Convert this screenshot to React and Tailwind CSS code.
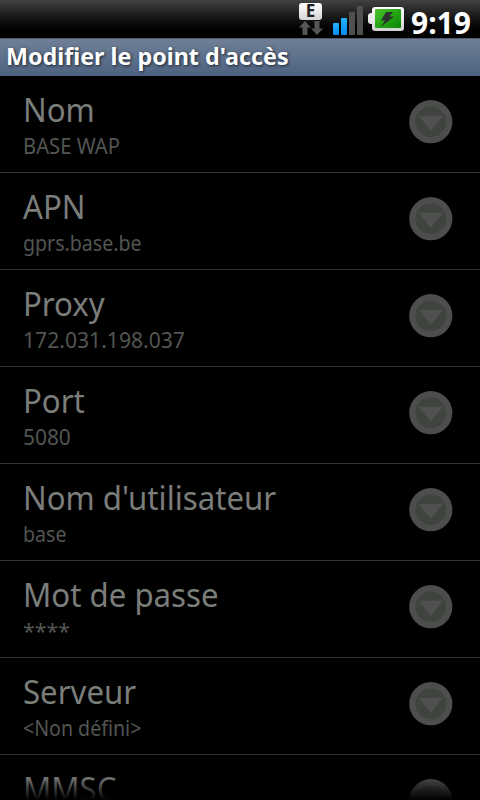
import React from "react";

const settings = [
  { title: "Nom", value: "BASE WAP", stretch: "scale-x-[0.92]" },
  { title: "APN", value: "gprs.base.be" },
  { title: "Proxy", value: "172.031.198.037", stretch: "scale-x-[0.96]" },
  { title: "Port", value: "5080", stretch: "scale-x-[0.95]" },
  { title: "Nom d'utilisateur", value: "base" },
  { title: "Mot de passe", value: "****", stretch: "scale-x-[0.97]" },
  { title: "Serveur", value: "<Non défini>" },
  { title: "MMSC", value: "" },
];

const EdgeIcon = () => (
  <div className="flex h-[33px] w-6 flex-col items-start">
    <span className="flex h-[17px] w-[23px] items-center justify-center rounded-[3px] bg-gradient-to-b from-white to-[#d6d6d6] pb-px text-[17px] font-bold leading-[16px] text-[#222]">
      E
    </span>
    <svg width="24" height="15" viewBox="0 0 24 15" className="mt-px" fill="#555">
      <path d="M6 0 L12 6.5 H8.5 V14 H3.5 V6.5 H0 Z" />
      <path d="M18 14 L24 7.5 H20.5 V0 H15.5 V7.5 H12 Z" />
    </svg>
  </div>
);

const SignalIcon = () => (
  <svg width="30" height="29" viewBox="0 0 30 29">
    <defs>
      <linearGradient id="signal" x1="0" y1="0" x2="0" y2="1">
        <stop offset="0" stopColor="#25b4ff" />
        <stop offset="1" stopColor="#0787f5" />
      </linearGradient>
    </defs>
    <rect x="0" y="17" width="6" height="12" rx="1" fill="url(#signal)" />
    <rect x="8" y="12" width="6" height="17" rx="1" fill="url(#signal)" />
    <rect x="16" y="6" width="6" height="23" rx="1" fill="#505050" />
    <rect x="24" y="0" width="6" height="29" rx="1" fill="#505050" />
  </svg>
);

const BatteryIcon = () => (
  <svg width="36" height="25" viewBox="0 0 36 25">
    <defs>
      <linearGradient id="shell" x1="0" y1="0" x2="0" y2="1">
        <stop offset="0" stopColor="#fff" />
        <stop offset="1" stopColor="#d2d2d2" />
      </linearGradient>
      <linearGradient id="charge" x1="0" y1="0" x2="1" y2="1">
        <stop offset="0" stopColor="#4fc32f" />
        <stop offset="0.5" stopColor="#27a615" />
        <stop offset="1" stopColor="#0b8503" />
      </linearGradient>
    </defs>
    <path
      d="M7 0 H33 Q36 0 36 3 V21 Q36 24 33 24 H7 Q4 24 4 21 V17 H2.5 Q0 16.5 0 14.5 V8.5 Q0 6.5 2.5 6 H4 V3 Q4 0 7 0 Z"
      fill="url(#shell)"
    />
    <rect x="7" y="2" width="26" height="19" rx="1" fill="url(#charge)" />
    <path d="M18 5 H25 L21.5 9.5 H26 L13 20 L17 13.5 H13 Z" fill="#2b332b" />
  </svg>
);

const MoreIcon = () => (
  <svg width="44" height="44" viewBox="0 0 44 44" className="shrink-0">
    <circle cx="21.8" cy="21.7" r="21.6" fill="#4d4d4d" />
    <circle cx="21.8" cy="21.7" r="15.3" fill="#3f443f" />
    <path d="M9.5 15.8 H34 L21.8 30.8 Z" fill="#505050" />
  </svg>
);

const SettingRow = ({ title, value, stretch = "scale-x-[0.89]" }) => (
  <li className="flex h-[97px] items-start justify-between border-b border-[#343634] pl-[23px] pr-[27px]">
    <div className="whitespace-nowrap pt-[11px]">
      <h2 className="origin-left scale-x-[0.945] text-[33px] leading-[46px] text-[#7b7d7b]">{title}</h2>
      <p className={`origin-left text-[22px] leading-[24px] text-[#525552] ${stretch}`}>{value}</p>
    </div>
    <div className="pt-6">
      <MoreIcon />
    </div>
  </li>
);

export default function App() {
  return (
    <div className="relative flex h-[800px] w-[480px] flex-col overflow-hidden bg-black font-['Noto_Sans',sans-serif]">
      <header className="flex h-[38px] shrink-0 items-start justify-end bg-gradient-to-b from-[#424242] to-black pr-[10px]">
        <div className="pt-[3px]">
          <EdgeIcon />
        </div>
        <div className="ml-[10px] pt-[6px]">
          <SignalIcon />
        </div>
        <div className="ml-[5px] pt-[7px]">
          <BatteryIcon />
        </div>
        <time className="ml-[7px] w-[59px] whitespace-nowrap pt-[2px] text-[30px] font-bold leading-[41px] text-white">
          9:19
        </time>
      </header>

      <h1 className="h-[38px] shrink-0 whitespace-nowrap border-t border-[#52596b] bg-gradient-to-b from-[#6f7f96] to-[#4d6280] pl-[6px] text-[23.3px] font-bold leading-[35px] text-white [text-shadow:1px_1px_3px_#182430]">
        Modifier le point d'accès
      </h1>

      <ul className="min-h-0 flex-1 overflow-hidden">
        {settings.map((item) => (
          <SettingRow key={item.title} {...item} />
        ))}
      </ul>

      {/* fade at the bottom of the scrolling list */}
      <div className="pointer-events-none absolute inset-x-0 bottom-0 h-6 bg-gradient-to-b from-transparent to-black" />
    </div>
  );
}
